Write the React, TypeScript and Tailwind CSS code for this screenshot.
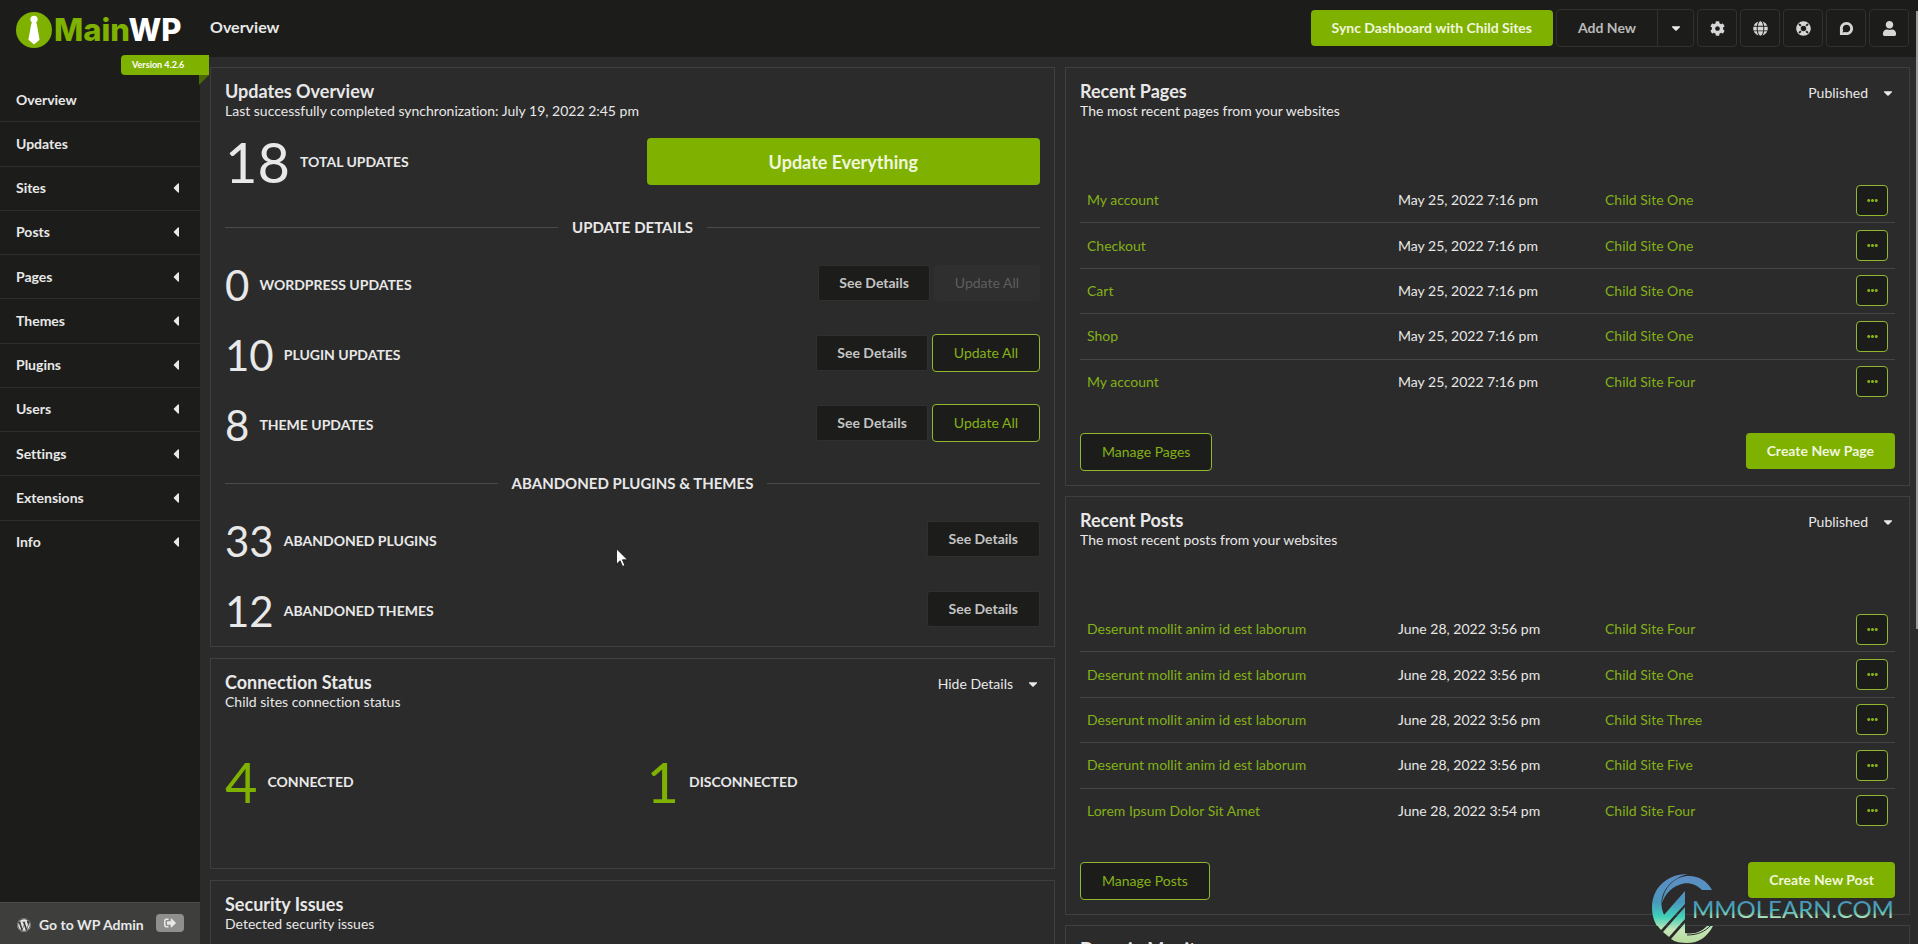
import React from "react";
import {
  FaCog,
  FaGlobe,
  FaLifeRing,
  FaDiscourse,
  FaUser,
  FaCaretLeft,
  FaCaretDown,
  FaEllipsisH,
  FaWordpress,
  FaSignOutAlt,
} from "react-icons/fa";

type Row = { title: string; date: string; site: string };

const navItems: { label: string; sub: boolean }[] = [
  { label: "Overview", sub: false },
  { label: "Updates", sub: false },
  { label: "Sites", sub: true },
  { label: "Posts", sub: true },
  { label: "Pages", sub: true },
  { label: "Themes", sub: true },
  { label: "Plugins", sub: true },
  { label: "Users", sub: true },
  { label: "Settings", sub: true },
  { label: "Extensions", sub: true },
  { label: "Info", sub: true },
];

const pages: Row[] = [
  { title: "My account", date: "May 25, 2022 7:16 pm", site: "Child Site One" },
  { title: "Checkout", date: "May 25, 2022 7:16 pm", site: "Child Site One" },
  { title: "Cart", date: "May 25, 2022 7:16 pm", site: "Child Site One" },
  { title: "Shop", date: "May 25, 2022 7:16 pm", site: "Child Site One" },
  { title: "My account", date: "May 25, 2022 7:16 pm", site: "Child Site Four" },
];

const posts: Row[] = [
  { title: "Deserunt mollit anim id est laborum", date: "June 28, 2022 3:56 pm", site: "Child Site Four" },
  { title: "Deserunt mollit anim id est laborum", date: "June 28, 2022 3:56 pm", site: "Child Site One" },
  { title: "Deserunt mollit anim id est laborum", date: "June 28, 2022 3:56 pm", site: "Child Site Three" },
  { title: "Deserunt mollit anim id est laborum", date: "June 28, 2022 3:56 pm", site: "Child Site Five" },
  { title: "Lorem Ipsum Dolor Sit Amet", date: "June 28, 2022 3:54 pm", site: "Child Site Four" },
];

function Logo() {
  return (
    <a href="#home" aria-label="MainWP" className="flex h-9 items-center gap-[2px]">
      <svg viewBox="0 0 36 36" className="size-9 shrink-0" aria-hidden="true">
        <circle cx="18" cy="18" r="18" fill="#7fb100" />
        <circle cx="18" cy="7.3" r="3.6" fill="#fff" />
        <path d="M16 10h4l1 3.200 2.600 14.600L18 32.400l-5.600-4.600L15 13.200z" fill="#fff" />
      </svg>
      <span className="font-[Inter,sans-serif] text-[31px] leading-9 font-extrabold text-white">
        <span className="text-[#7fb100]">Main</span>WP
      </span>
    </a>
  );
}

function Sidebar() {
  return (
    <aside className="relative flex w-[200px] shrink-0 flex-col bg-[#1c1d1b]">
      <div className="flex h-[78px] items-start pt-3 pl-4">
        <Logo />
      </div>
      <div className="absolute top-[55px] right-[-9px] z-10">
        <div className="h-5 w-[88px] rounded-l-sm bg-[#7fb100] pl-[11px] text-[9px] leading-5 font-bold text-white">
          Version 4.2.6
        </div>
        <svg viewBox="0 0 10 10" className="ml-auto size-[10px]" aria-hidden="true">
          <path d="M0 0h10L0 10z" fill="#4b6a04" />
        </svg>
      </div>
      <nav aria-label="Main">
        <ul className="flex h-[486px] flex-col">
          {navItems.map((item) => (
            <li key={item.label} className="flex-1 border-b border-[#2e2f2d] last:border-b-0">
              <a
                href={"#" + item.label.toLowerCase()}
                className="flex h-full items-center justify-between pr-4 pl-4 text-sm font-bold text-[#e8e8e8]"
              >
                {item.label}
                {item.sub && <FaCaretLeft className="size-4" />}
              </a>
            </li>
          ))}
        </ul>
      </nav>
      <div className="mt-auto flex h-[42px] items-center border-t border-[#4c4d4b] bg-[#3e3f3d] pt-[2px] pl-[17px]">
        <a href="#wp-admin" className="flex items-center gap-2 text-sm font-bold text-[#e8e8e8]">
          <FaWordpress className="size-[14px]" />
          Go to WP Admin
        </a>
        <button
          type="button"
          aria-label="Log out"
          className="mb-1 ml-3 flex h-[18px] w-7 items-center justify-center rounded-sm bg-[#8f908e] text-[#e8e8e8]"
        >
          <FaSignOutAlt className="size-3" />
        </button>
      </div>
    </aside>
  );
}

const iconButtons = [
  { label: "Settings", Icon: FaCog },
  { label: "Sites", Icon: FaGlobe },
  { label: "Help", Icon: FaLifeRing },
  { label: "Community", Icon: FaDiscourse },
  { label: "Account", Icon: FaUser },
];

function Header() {
  return (
    <header className="flex h-[57px] shrink-0 items-start justify-between bg-[#1c1d1b] pr-[9px] pl-[10px]">
      <h1 className="pt-[17px] text-base leading-5 font-bold text-[#e8e8e8]">Overview</h1>
      <div className="flex items-center gap-[3px] pt-[9px]">
        <button type="button" className="h-9 rounded-[4px] bg-[#7fb100] px-[21px] text-sm font-bold text-[#f0f6dc]">
          Sync Dashboard with Child Sites
        </button>
        <div className="flex h-[38px] rounded-[4px] border border-[#30312f] text-[#b9bab8]">
          <button type="button" className="w-[101px] border-r border-[#30312f] text-sm font-bold">
            Add New
          </button>
          <button type="button" aria-label="More" className="flex w-[35px] items-center justify-center text-[#e8e8e8]">
            <FaCaretDown className="size-[14px]" />
          </button>
        </div>
        {iconButtons.map(({ label, Icon }) => (
          <button
            key={label}
            type="button"
            aria-label={label}
            className="flex h-[38px] w-10 items-center justify-center rounded-[4px] border border-[#30312f] text-[#d6d6d6]"
          >
            <Icon className="size-[15px]" />
          </button>
        ))}
      </div>
    </header>
  );
}

function Panel({
  title,
  subtitle,
  filter,
  className = "px-[14px] pt-[13px] pb-[14px]",
  children,
}: {
  title: string;
  subtitle?: string;
  filter?: string[];
  className?: string;
  children?: React.ReactNode;
}) {
  return (
    <section className={"border border-[#3f3f3f] " + className}>
      <div className="flex items-start justify-between">
        <div>
          <h2 className="text-lg leading-5 font-bold text-[#e8e8e8]">{title}</h2>
          {subtitle && <p className="text-sm leading-5 text-[#e8e8e8]">{subtitle}</p>}
        </div>
        {filter && (
          <div className="relative flex items-center pt-px">
            <select
              aria-label={title + " filter"}
              className="cursor-pointer appearance-none bg-transparent pr-[27px] text-right text-sm leading-[22px] text-[#e8e8e8]"
            >
              {filter.map((f) => (
                <option key={f}>{f}</option>
              ))}
            </select>
            <FaCaretDown className="pointer-events-none absolute right-0 size-[14px] text-[#e8e8e8]" />
          </div>
        )}
      </div>
      {children}
    </section>
  );
}

function Divider({ label, className }: { label: string; className: string }) {
  return (
    <div className={"flex items-center gap-[14px] " + className}>
      <span className="h-px flex-1 bg-[#4b4b4b]" />
      <h3 className="text-[15px] leading-5 font-bold text-[#e8e8e8] uppercase">{label}</h3>
      <span className="h-px flex-1 bg-[#4b4b4b]" />
    </div>
  );
}

function SeeDetails({ wide = false }: { wide?: boolean }) {
  return (
    <button
      type="button"
      className={
        "h-9 rounded-[3px] border border-[#30312f] bg-[#1c1d1b] text-sm font-bold text-[#c4c4c4] " +
        (wide ? "px-[21px]" : "px-5")
      }
    >
      See Details
    </button>
  );
}

function OutlineButton({ children }: { children: React.ReactNode }) {
  return (
    <button
      type="button"
      className="h-[38px] rounded-[4px] border border-[#8fb82e] bg-[#1c1d1b] px-[21px] text-sm text-[#84b117]"
    >
      {children}
    </button>
  );
}

function SolidButton({ children }: { children: React.ReactNode }) {
  return (
    <button type="button" className="h-9 rounded-[4px] bg-[#7fb100] px-[21px] text-sm font-bold text-[#f0f6dc]">
      {children}
    </button>
  );
}

function UpdateRow({ count, label, update }: { count: number; label: string; update?: "on" | "off" }) {
  return (
    <div className="flex h-[70px] items-center justify-between">
      <div className="flex items-center gap-[10px] text-[#e8e8e8]">
        <span className="text-[42px] leading-10">{count}</span>
        <span className="text-sm font-bold uppercase">{label}</span>
      </div>
      <div className="flex items-center gap-1 pb-1">
        <SeeDetails wide={!update} />
        {update === "off" && (
          <button type="button" disabled className="h-9 rounded-[3px] bg-[#2f2f2f] px-[21px] text-sm text-[#5e5e5e]">
            Update All
          </button>
        )}
        {update === "on" && <OutlineButton>Update All</OutlineButton>}
      </div>
    </div>
  );
}

function Statistic({ count, label }: { count: number; label: string }) {
  return (
    <div className="flex items-center gap-[10px]">
      <span className="text-[56px] leading-[56px] text-[#7fb100]">{count}</span>
      <span className="text-sm font-bold text-[#e8e8e8] uppercase">{label}</span>
    </div>
  );
}

function RecentPanel({
  title,
  subtitle,
  rows,
  manage,
  create,
}: {
  title: string;
  subtitle: string;
  rows: Row[];
  manage: string;
  create: string;
}) {
  return (
    <Panel title={title} subtitle={subtitle} filter={["Published", "Draft", "Pending", "Trash"]}>
      <table className="mt-[57px] h-[226px] w-full table-fixed border-collapse text-sm">
        <colgroup>
          <col />
          <col className="w-[207px]" />
          <col className="w-[207px]" />
          <col className="w-[90px]" />
        </colgroup>
        <tbody>
          {rows.map((r, i) => (
            <tr key={i} className="border-b border-[#454545] last:border-b-0">
              <td className="pl-[7px] text-[#84b117]">
                <a href="#item">{r.title}</a>
              </td>
              <td className="pl-[7px] text-[#e8e8e8]">{r.date}</td>
              <td className="pl-[7px] text-[#84b117]">
                <a href="#site">{r.site}</a>
              </td>
              <td className="pr-[7px]">
                <button
                  type="button"
                  aria-label={"Actions for " + r.title}
                  className="ml-auto flex h-[31px] w-8 items-center justify-center rounded-[4px] border border-[#8fb82e] bg-[#1c1d1b] text-[#84b117]"
                >
                  <FaEllipsisH className="size-[11px]" />
                </button>
              </td>
            </tr>
          ))}
        </tbody>
      </table>
      <div className="mt-[29px] flex items-start justify-between">
        <OutlineButton>{manage}</OutlineButton>
        <SolidButton>{create}</SolidButton>
      </div>
    </Panel>
  );
}

function Watermark() {
  return (
    <svg
      viewBox="0 0 250 72"
      className="pointer-events-none absolute right-[17px] bottom-0 h-[72px] w-[250px]"
      role="img"
      aria-label="MMOLEARN.COM"
    >
      <defs>
        <linearGradient id="mark" x1="0" y1="0" x2="0" y2="72" gradientUnits="userSpaceOnUse">
          <stop offset="0.1" stopColor="#5b8fc4" />
          <stop offset="0.42" stopColor="#4a98bd" />
          <stop offset="0.62" stopColor="#3fd0b8" />
          <stop offset="0.8" stopColor="#c6e6b8" />
          <stop offset="1" stopColor="#b5d99a" />
        </linearGradient>
        <linearGradient id="word" x1="0" y1="27" x2="0" y2="49" gradientUnits="userSpaceOnUse">
          <stop offset="0" stopColor="#4f86bb" />
          <stop offset="0.5" stopColor="#46b0ba" />
          <stop offset="0.8" stopColor="#9fdcb8" />
          <stop offset="1" stopColor="#dcecc0" />
        </linearGradient>
      </defs>
      <g fill="url(#mark)">
        <path d="M37 2C14 2 1 18 1 35c0 8 2 14 5 19l8-9C8 33 10 22 17 14c6-7 12-10 20-12z" />
        <path d="M11 31C13 14 25 4 38 4c10 0 18 5 23 14H51C45 12 36 9 28 13 19 16 14 23 11 31z" />
        <path d="M5 52L34 19v13L10 58z" />
        <path d="M12 60l22-25v12L18 65z" />
        <path d="M20 67l14-16v10c10 2 17-2 22-7h6c-6 11-14 17-26 17-6 0-12-1-16-4z" />
      </g>
      <path d="M36 63c10 0 18-3 24-10" fill="none" stroke="#2b2b2b" strokeWidth="1" />
      <text x="41" y="46" fill="url(#word)" fontFamily="Lato, sans-serif" fontSize="24">
        MMOLEARN.COM
      </text>
    </svg>
  );
}

function Cursor() {
  return (
    <svg viewBox="0 0 12 19" className="pointer-events-none absolute top-[548px] left-[616px] h-[19px] w-3" aria-hidden="true">
      <path
        d="M.5.8v15.400l3.600-3.500 2.500 5.700 2.300-1-2.500-5.600h5.100z"
        fill="#fff"
        stroke="#111"
        strokeWidth="0.8"
      />
    </svg>
  );
}

export default function App() {
  return (
    <div className="relative flex h-screen overflow-hidden bg-[#2b2b2b] font-[Lato,sans-serif] text-[#e8e8e8] [font-variant-ligatures:none]">
      <Sidebar />
      <div className="flex min-w-0 flex-1 flex-col">
        <Header />
        <main className="grid min-h-0 flex-1 grid-cols-2 items-start gap-[10px] overflow-hidden pt-[10px] pr-2 pl-[10px]">
          <div className="flex flex-col gap-[11px]">
            <Panel
              title="Updates Overview"
              subtitle="Last successfully completed synchronization: July 19, 2022 2:45 pm"
              className="px-[14px] pt-[13px]"
            >
              <div className="mt-[17px] grid grid-cols-2 items-center gap-7">
                <div className="flex items-center gap-[10px]">
                  <span className="text-[56px] leading-[47px]">18</span>
                  <span className="text-sm font-bold uppercase">Total Updates</span>
                </div>
                <button type="button" className="h-[47px] rounded-[4px] bg-[#7fb100] text-lg font-bold text-[#f0f6dc]">
                  Update Everything
                </button>
              </div>
              <Divider label="Update Details" className="mt-8" />
              <div className="mt-[13px]">
                <UpdateRow count={0} label="WordPress Updates" update="off" />
                <UpdateRow count={10} label="Plugin Updates" update="on" />
                <UpdateRow count={8} label="Theme Updates" update="on" />
              </div>
              <Divider label="Abandoned Plugins & Themes" className="mt-[13px]" />
              <div className="mt-[13px]">
                <UpdateRow count={33} label="Abandoned Plugins" />
                <UpdateRow count={12} label="Abandoned Themes" />
              </div>
            </Panel>
            <Panel
              title="Connection Status"
              subtitle="Child sites connection status"
              filter={["Hide Details", "Show Details"]}
              className="h-[211px] px-[14px] pt-[13px]"
            >
              <div className="mt-[42px] grid grid-cols-2 gap-7">
                <Statistic count={4} label="Connected" />
                <Statistic count={1} label="Disconnected" />
              </div>
            </Panel>
            <Panel
              title="Security Issues"
              subtitle="Detected security issues"
              className="h-[211px] px-[14px] pt-[13px]"
            />
          </div>
          <div className="flex flex-col gap-[10px]">
            <RecentPanel
              title="Recent Pages"
              subtitle="The most recent pages from your websites"
              rows={pages}
              manage="Manage Pages"
              create="Create New Page"
            />
            <RecentPanel
              title="Recent Posts"
              subtitle="The most recent posts from your websites"
              rows={posts}
              manage="Manage Posts"
              create="Create New Post"
            />
            <Panel title="Domain Monitor" />
          </div>
        </main>
      </div>
      <div className="pointer-events-none absolute top-[11px] right-0 h-[618px] w-[2px] bg-[#9a9a9a]" />
      <Cursor />
      <Watermark />
    </div>
  );
}
